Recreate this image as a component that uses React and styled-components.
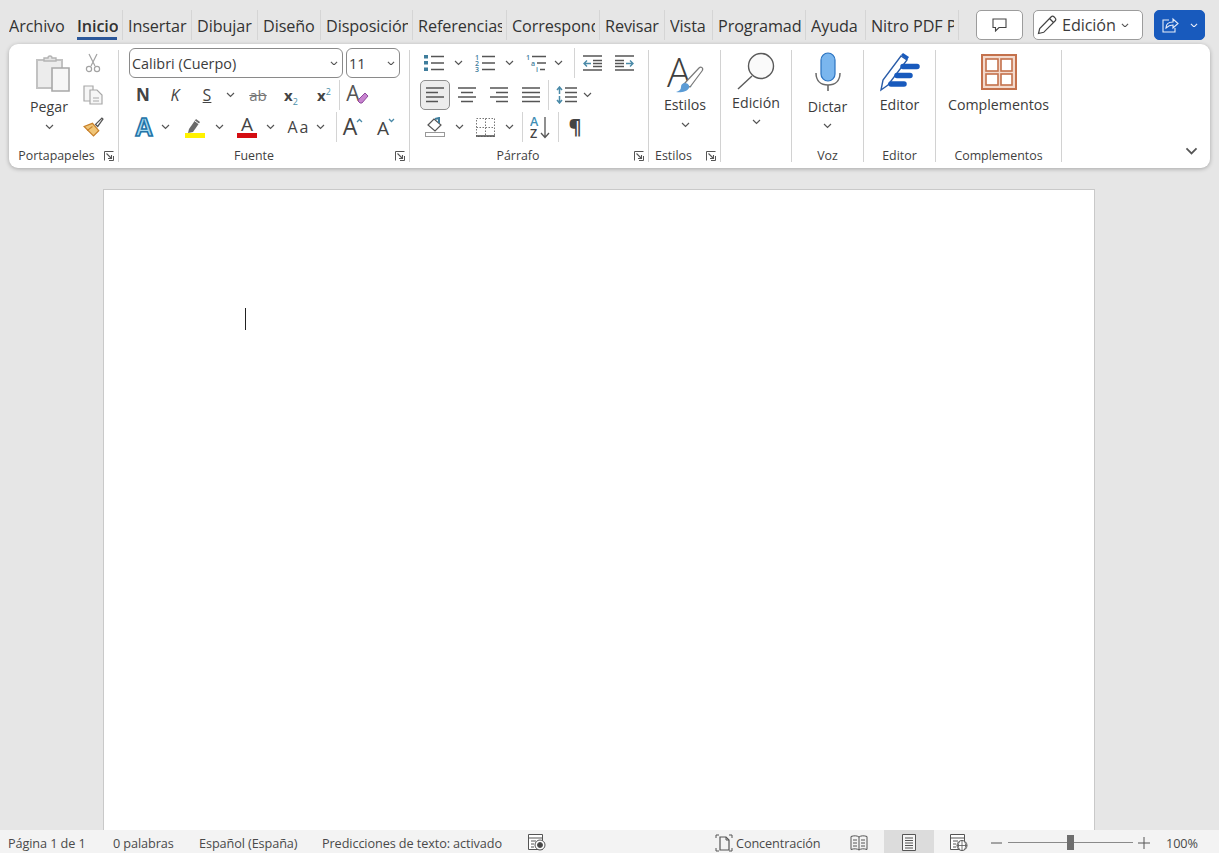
import styled, { createGlobalStyle } from 'styled-components';

const UI_FONT = '"Open Sans", "Noto Sans", "Liberation Sans", sans-serif';

const GlobalStyle = createGlobalStyle`
  html, body, #root {
    margin: 0;
    height: 100%;
  }
  body {
    font-family: ${UI_FONT};
    color: #3c3c3c;
    background: #e6e6e6;
    overflow: hidden;
  }
`;

const Shell = styled.div`
  display: flex;
  flex-direction: column;
  height: 100vh;
`;

const TitleRow = styled.header`
  display: flex;
  align-items: flex-start;
  height: 36px;
  padding: 8px 0 0 4px;
  flex-shrink: 0;
`;

const Tabs = styled.nav`
  display: flex;
  margin-top: 2px;
`;

const Tab = styled.div`
  position: relative;
  width: ${(p) => p.$w}px;
  height: 30px;
  padding: 2px 4px 0 5px;
  box-sizing: border-box;
  border-right: 1px solid ${(p) => (p.$plain ? 'transparent' : '#d5d5d5')};
  color: #333;

  &::after {
    content: '';
    display: ${(p) => (p.$active ? 'block' : 'none')};
    position: absolute;
    left: 5px;
    right: 5px;
    bottom: 0;
    height: 3px;
    background: #2b579a;
  }
`;

const TabLabel = styled.span`
  display: block;
  font-size: 16.2px;
  font-weight: ${(p) => (p.$active ? 600 : 400)};
  line-height: 28px;
  letter-spacing: -0.1px;
  white-space: nowrap;
  overflow: hidden;
`;

const HeadButton = styled.button`
  display: flex;
  align-items: center;
  justify-content: ${(p) => (p.$pl ? 'flex-start' : 'center')};
  gap: ${(p) => p.$gap || 0}px;
  width: ${(p) => p.$w}px;
  height: 30px;
  margin: 2px 0 0 ${(p) => p.$ml}px;
  padding: 0 0 0 ${(p) => p.$pl || 0}px;
  border: 1px solid ${(p) => (p.$primary ? '#185abd' : '#9c9c9c')};
  border-radius: 5px;
  background: ${(p) => (p.$primary ? '#185abd' : '#fff')};
  color: #3c3c3c;
  font-family: inherit;
  font-size: 16.2px;
  letter-spacing: -0.1px;
`;

const Ribbon = styled.section`
  display: flex;
  flex-shrink: 0;
  height: 124px;
  margin: 0 9px;
  padding: 6px 0;
  box-sizing: border-box;
  background: #fff;
  border-radius: 9px;
  box-shadow: 0 1px 4px rgba(0, 0, 0, 0.28);
`;

const Group = styled.div`
  display: flex;
  flex-direction: column;
  width: ${(p) => p.$w}px;
  flex-shrink: 0;
  box-sizing: border-box;
  border-right: 1px solid #d2d2d2;
`;

const GroupBody = styled.div`
  display: flex;
  height: 98px;
  margin-top: -3px;
  padding-left: ${(p) => p.$pl || 0}px;
  flex-shrink: 0;
`;

const GroupFoot = styled.div`
  display: flex;
  align-items: center;
  height: 17px;
  margin-top: 2px;
`;

const GroupLabel = styled.span`
  flex: 1;
  padding-right: ${(p) => p.$pr || 0}px;
  font-size: 12.4px;
  line-height: 17px;
  text-align: center;
  color: #3f3f3f;
  white-space: nowrap;
`;

const BigButton = styled.div`
  display: flex;
  flex-direction: column;
  align-items: center;
  width: ${(p) => p.$w}px;
  padding-top: ${(p) => p.$pt}px;
  flex-shrink: 0;
`;

const BigLabel = styled.span`
  margin-top: ${(p) => p.$gap}px;
  font-size: 14.2px;
  line-height: 18px;
  color: #3c3c3c;
  white-space: nowrap;
`;

const ToolColumn = styled.div`
  display: flex;
  flex-direction: column;
  width: 24px;
`;

const ToolStack = styled.div`
  display: flex;
  flex-direction: column;
`;

const ToolRow = styled.div`
  display: flex;
  align-items: center;
  height: 32px;
`;

const ToolCell = styled.div`
  display: flex;
  align-items: center;
  justify-content: center;
  height: 32px;
`;

const Slot = styled.span`
  display: flex;
  align-items: center;
  justify-content: center;
  flex-shrink: 0;
  width: ${(p) => p.$w}px;
  margin-left: ${(p) => p.$ml || 0}px;
  margin-top: ${(p) => p.$mt || 0}px;
`;

const Glyph = styled(Slot)`
  display: block;
  text-align: center;
  font-size: ${(p) => p.$size}px;
  font-weight: ${(p) => p.$weight || 400};
  font-style: ${(p) => (p.$italic ? 'italic' : 'normal')};
  text-decoration: ${(p) => p.$line || 'none'};
  letter-spacing: ${(p) => p.$track || 0}px;
  line-height: 20px;
  color: ${(p) => p.$color || '#444'};
`;

const Script = styled.span`
  font-size: 9px;
  font-weight: 400;
  line-height: 0;
  color: #4a90a8;
  vertical-align: ${(p) => (p.$up ? 'super' : 'sub')};
`;

const Divider = styled.span`
  flex-shrink: 0;
  width: 1px;
  height: 30px;
  margin-left: ${(p) => p.$ml || 0}px;
  background: #d4d4d4;
`;

const ActiveTool = styled.span`
  display: flex;
  align-items: center;
  justify-content: center;
  flex-shrink: 0;
  width: 30px;
  height: 30px;
  box-sizing: border-box;
  border: 1px solid #8d8d8d;
  border-radius: 5px;
  background: #ececec;
`;

const SelectRow = styled.div`
  display: flex;
  align-items: center;
  gap: 3px;
  height: 32px;
`;

const SelectBox = styled.div`
  display: flex;
  align-items: center;
  justify-content: space-between;
  width: ${(p) => p.$w}px;
  height: 30px;
  padding: 0 4px 0 2px;
  box-sizing: border-box;
  border: 1px solid #8a8a8a;
  border-radius: 6px;
  font-size: 14.4px;
  color: #3c3c3c;
`;

const CollapseArea = styled.div`
  display: flex;
  flex: 1;
  align-items: flex-end;
  justify-content: flex-end;
  padding: 0 12px 7px 0;
`;

const Workspace = styled.main`
  flex: 1;
  min-height: 0;
  padding: 21px 0 0 103px;
  overflow: hidden;
`;

const Sheet = styled.div`
  width: 992px;
  height: 100%;
  padding: 118px 0 0 141px;
  box-sizing: border-box;
  background: #fff;
  border: 1px solid #c9c9c9;
  border-bottom: 0;
`;

const Caret = styled.div`
  width: 1px;
  height: 22px;
  background: #222;
`;

const StatusBar = styled.footer`
  display: flex;
  align-items: center;
  flex-shrink: 0;
  height: 23px;
  background: #f3f3f3;
  font-size: 12.7px;
  color: #4a4a4a;
  letter-spacing: -0.1px;
  white-space: nowrap;
`;

const StatusText = styled.span`
  width: ${(p) => p.$w}px;
  flex-shrink: 0;
  margin-left: ${(p) => p.$ml || 0}px;
  padding-top: 2px;
`;

const StatusIcon = styled.span`
  display: flex;
  align-items: center;
  justify-content: center;
  flex-shrink: 0;
  width: ${(p) => p.$w}px;
  height: 23px;
  padding-top: 2px;
  box-sizing: border-box;
  margin-left: ${(p) => p.$ml || 0}px;
  background: ${(p) => (p.$active ? '#dcdcdc' : 'transparent')};
`;

const ZoomTrack = styled.div`
  display: flex;
  align-items: center;
  width: 125px;
  height: 16px;
  margin: 2px 0 0 6px;
  padding-left: 59px;
  box-sizing: border-box;
  flex-shrink: 0;
  background: linear-gradient(#8a8a8a, #8a8a8a) center / 100% 1px no-repeat;
`;

const ZoomThumb = styled.div`
  width: 7px;
  height: 15px;
  background: #6e6e6e;
`;

const LauncherMark = styled.svg`
  flex-shrink: 0;
  margin-right: 4px;
`;

const INK = '#555';
const TEAL = '#4a8aa8';

function Chev({ ml = 0, mt = 0, w = 9, color = '#555' }) {
  return (
    <Slot $w={w} $ml={ml} $mt={mt}>
      <svg width={w} height={w * 0.62} viewBox="0 0 9 5.6" fill="none">
        <path d="M1 1l3.5 3.5L8 1" stroke={color} strokeWidth="1.2" />
      </svg>
    </Slot>
  );
}

function PasteIcon() {
  return (
    <svg width="43" height="38" viewBox="-7 0 43 38" fill="none">
      <path d="M2 6h25v28H2z" fill="#ececec" stroke="#c2c2c2" strokeWidth="2" />
      <path d="M9 7V4h4a2 2 0 0 1 4 0h4v3z" fill="#e4e4e4" stroke="#b4b4b4" strokeWidth="1.4" />
      <path d="M17 14h17v23H17z" fill="#f6f6f6" stroke="#a8a8a8" strokeWidth="1.6" />
    </svg>
  );
}

function ScissorsIcon() {
  return (
    <svg width="16" height="20" viewBox="0 0 16 20" fill="none" stroke="#a3a3a3" strokeWidth="1.2">
      <path d="M4 1l6 12M12 1L6 13" />
      <circle cx="4" cy="16" r="2.6" />
      <circle cx="12" cy="16" r="2.6" />
    </svg>
  );
}

function CopyIcon() {
  return (
    <svg width="20" height="20" viewBox="0 0 20 20" fill="#f6f6f6" stroke="#a8a8a8" strokeWidth="1.2">
      <path d="M1 1h9v15H1z" />
      <path d="M7 5h7l5 5v9H7z" />
      <path d="M10 13h6M10 16h6" />
    </svg>
  );
}

function PainterIcon() {
  return (
    <svg width="21" height="20" viewBox="0 0 20 19" fill="none">
      <path d="M1 9l8-3 6 7-5 5z" fill="#f0c577" stroke="#c8802a" strokeWidth="1.2" />
      <path d="M4 13l5-4" stroke="#c8802a" />
      <path d="M12 7l6-6 1 1-5 7z" fill="#fff" stroke="#555" strokeWidth="1.2" />
    </svg>
  );
}

function TextEffectIcon() {
  return (
    <svg width="22" height="21" viewBox="0 0 22 21">
      <text x="11" y="19" textAnchor="middle" fontFamily="Liberation Sans" fontWeight="700" fontSize="25" fill="#a8daf0" stroke="#2274a8" strokeWidth="1.6">A</text>
    </svg>
  );
}

function HighlightIcon() {
  return (
    <svg width="22" height="22" viewBox="0 0 22 22" fill="none">
      <path d="M5 13l7-10 4 3-7 10-5 1z" fill="#6b6b6b" />
      <path d="M11 5l4 3" stroke="#fff" />
      <rect x="1" y="17" width="20" height="5" fill="#fff200" />
    </svg>
  );
}

function FontColorIcon() {
  return (
    <svg width="20" height="22" viewBox="0 0 20 22">
      <text x="10" y="15" textAnchor="middle" fontFamily="Open Sans" fontSize="19" fill="#444">A</text>
      <rect x="0" y="17" width="20" height="5" fill="#d40d12" />
    </svg>
  );
}

function EraseIcon() {
  return (
    <svg width="24" height="22" viewBox="0 0 24 22" fill="none">
      <text x="8" y="17" textAnchor="middle" fontFamily="Open Sans" fontSize="21" fill="#555">A</text>
      <path d="M14 15l6-6 3 3-6 7h-2l-2-2z" fill="#c884d0" stroke="#8e4a9c" />
    </svg>
  );
}

function GrowIcon({ small }) {
  return (
    <svg width="22" height="22" viewBox="0 0 22 22" fill="none">
      <text x="9" y="19" textAnchor="middle" fontFamily="Open Sans" fontSize={small ? 19 : 23} fill="#444">A</text>
      <path d={small ? 'M15 3l2.5 2.5L20 3' : 'M16 6l2.5-2.5L21 6'} stroke={TEAL} strokeWidth="1.3" />
    </svg>
  );
}

function BulletListIcon() {
  return (
    <svg width="20" height="18" viewBox="0 0 20 18" fill="none">
      <path d="M0 1h4v3.4H0zM0 7h4v3.4H0zM0 13.500h4v3.4H0z" fill="#3f7d9c" />
      <path d="M7 2.500h13M7 9h13M7 15.500h13" stroke={INK} strokeWidth="1.4" />
    </svg>
  );
}

function NumberListIcon() {
  return (
    <svg width="20" height="18" viewBox="0 0 20 18" fill="none">
      <g fontFamily="Open Sans" fontSize="7" fontWeight="600" fill="#3f7d9c">
        <text x="0" y="6">1</text>
        <text x="0" y="12">2</text>
        <text x="0" y="18">3</text>
      </g>
      <path d="M7 2.500h13M7 9h13M7 15.500h13" stroke={INK} strokeWidth="1.4" />
    </svg>
  );
}

function MultiListIcon() {
  return (
    <svg width="21" height="18" viewBox="0 0 21 18" fill="none">
      <g fontFamily="Open Sans" fontSize="7" fontWeight="600" fill="#3f7d9c">
        <text x="0" y="6">1</text>
        <text x="5" y="12">a</text>
        <text x="10" y="18">i</text>
      </g>
      <path d="M6 2.500h14M11 9h9M14 15.500h5" stroke={INK} strokeWidth="1.4" />
    </svg>
  );
}

function IndentIcon({ flip }) {
  return (
    <svg width="19" height="18" viewBox="0 0 19 18" fill="none" style={flip ? { transform: 'scaleX(-1)' } : undefined}>
      <path d="M0 2h19M0 16h19M10 6.500h9M10 9.500h9M10 12.500h9" stroke={INK} strokeWidth="1.3" />
      <path d="M1 9.500h7M4 6.500l-3 3 3 3" stroke={TEAL} strokeWidth="1.4" />
    </svg>
  );
}

const ALIGN_LINES = {
  left: 'M0 2h18M0 6.500h12M0 11h18M0 15.500h12',
  center: 'M0 2h18M3 6.500h12M0 11h18M3 15.500h12',
  right: 'M0 2h18M6 6.500h12M0 11h18M6 15.500h12',
  justify: 'M0 2h18M0 6.500h18M0 11h18M0 15.500h18',
};

function AlignIcon({ kind }) {
  return (
    <svg width="18" height="18" viewBox="0 0 18 18" fill="none">
      <path d={ALIGN_LINES[kind]} stroke={INK} strokeWidth="1.4" />
    </svg>
  );
}

function SpacingIcon() {
  return (
    <svg width="21" height="18" viewBox="0 0 21 18" fill="none">
      <path d="M3.500 1v7M1 4l2.500-3L6 4M3.500 10v7M1 14l2.500 3L6 14" stroke={TEAL} strokeWidth="1.5" />
      <path d="M9 2h12M9 6.500h12M9 11h12M9 15.500h12" stroke={INK} strokeWidth="1.4" />
    </svg>
  );
}

function FillIcon() {
  return (
    <svg width="20" height="20" viewBox="0 0 20 20" fill="none">
      <path d="M3 8l6-6 7 6-6 6z" fill="#fff" stroke={INK} strokeWidth="1.2" />
      <path d="M10 2l4-1v5" stroke="#3f7d9c" strokeWidth="2" />
      <rect x="0.500" y="15.500" width="19" height="4" fill="#fff" stroke="#999" />
    </svg>
  );
}

function BordersIcon() {
  return (
    <svg width="19" height="19" viewBox="0 0 19 19" fill="none">
      <path d="M0.500 0.500h18v18h-18zM9.500 0.500v18M0.500 9.500h18" stroke="#777" strokeDasharray="1.500 1.500" />
      <path d="M0 18h19" stroke={INK} strokeWidth="1.6" />
    </svg>
  );
}

function SortIcon() {
  return (
    <svg width="21" height="24" viewBox="0 0 21 24" fill="none">
      <text x="0" y="11" fontFamily="Open Sans" fontSize="12.500" fontWeight="600" fill="#3f8fb5">A</text>
      <text x="0" y="23" fontFamily="Open Sans" fontSize="12.500" fontWeight="600" fill="#444">Z</text>
      <path d="M15 2v20M11 18l4 4.500 4-4.500" stroke={INK} strokeWidth="1.3" />
    </svg>
  );
}

function StylesIcon() {
  return (
    <svg width="40" height="40" viewBox="0 0 40 40" fill="none">
      <text x="14" y="32" textAnchor="middle" fontFamily="Open Sans" fontWeight="300" fontSize="40" fill="#3f3f3f">A</text>
      <path d="M19 29L34 13c2-2 5 0 3 3L25 32z" fill="#fff" stroke="#7a7a7a" strokeWidth="1.2" />
      <path d="M11 37c4 1 11 0 13-4 1-2-1-5-4-5-2 0-4 1-4 4s-2 4-5 5z" fill="#5b9bd5" />
    </svg>
  );
}

function SearchIcon() {
  return (
    <svg width="38" height="40" viewBox="0 0 38 40" fill="none" stroke="#5a5a5a" strokeWidth="1.4">
      <circle cx="24" cy="14" r="12.500" fill="#fafafa" />
      <path d="M15 24L1 37" />
    </svg>
  );
}

function MicIcon() {
  return (
    <svg width="26" height="40" viewBox="0 0 26 40" fill="none">
      <rect x="6" y="1" width="14" height="28" rx="7" fill="#7ab6ee" stroke="#2b73c0" strokeWidth="1.2" />
      <path d="M1 21c0 8 5 12 12 12s12-4 12-12" stroke="#6a6a6a" strokeWidth="1.5" />
      <path d="M13 33v6" stroke="#6a6a6a" strokeWidth="1.6" />
    </svg>
  );
}

function EditorIcon() {
  return (
    <svg width="40" height="40" viewBox="0 0 40 40" fill="none">
      <path d="M1 38l2-10L21 4l6 4L8 33z" fill="#fff" stroke="#2a5ca8" strokeWidth="1.4" />
      <path d="M21 3l2-2 6 4-2 3z" fill="#185abd" />
      <path d="M23 14.500h14M17 23.500h13M11 32h13" stroke="#185abd" strokeWidth="5.500" strokeLinecap="round" />
    </svg>
  );
}

function AddinsIcon() {
  return (
    <svg width="36" height="36" viewBox="0 0 36 36">
      <rect x="1" y="1" width="34" height="34" fill="#f3dacd" stroke="#c4714c" strokeWidth="2" />
      <g fill="#fff" stroke="#c4714c" strokeWidth="1.6">
        <rect x="5" y="5" width="12" height="12" />
        <rect x="20" y="5" width="11" height="12" />
        <rect x="5" y="20" width="12" height="11" />
        <rect x="20" y="20" width="11" height="11" />
      </g>
    </svg>
  );
}

function Launcher() {
  return (
    <LauncherMark width="10" height="10" viewBox="0 0 10 10" fill="none" stroke="#555">
      <path d="M0.500 9.500v-9h9M9.500 5v4.500H5" strokeWidth="1" />
      <path d="M2.500 2.500l5 5M7.500 4v3.500H4" strokeWidth="1.1" />
    </LauncherMark>
  );
}

function CommentIcon() {
  return (
    <svg width="15" height="14" viewBox="0 0 15 14" fill="none" stroke="#444" strokeWidth="1.1">
      <path d="M1 1h13v8.500H7L3.500 13V9.500H1z" />
    </svg>
  );
}

function PencilIcon() {
  return (
    <svg width="20" height="20" viewBox="0 0 20 20" fill="none" stroke="#444" strokeWidth="1.2">
      <path d="M1.500 18.500l1.200-5L14 2c1-1 2.200-1 3.200 0l.8.800c1 1 1 2.200 0 3.200L6.700 17.300z" />
      <path d="M12.500 3.500l4 4" />
    </svg>
  );
}

function ShareIcon() {
  return (
    <svg width="17" height="16" viewBox="0 0 17 16" fill="none" stroke="#e8eefa" strokeWidth="1.1">
      <path d="M7 3H1v12h12v-4" />
      <path d="M4 11c0-4 3-6 7-6V2l5 4.500-5 4.500V8c-3 0-5 1-7 3z" />
    </svg>
  );
}

function MacroIcon() {
  return (
    <svg width="18" height="17" viewBox="0 0 18 17" fill="none" stroke="#555">
      <path d="M0.500 0.500h14v15h-14zM0.500 4h14M3 7h5M3 10h3M3 13h3" fill="#fff" />
      <circle cx="12" cy="11" r="5" fill="#fff" />
      <circle cx="12" cy="11" r="2.500" fill="#444" />
    </svg>
  );
}

function FocusIcon() {
  return (
    <svg width="18" height="18" viewBox="0 0 18 18" fill="none" stroke="#555">
      <path d="M1 4V1h3M14 1h3v3M1 14v3h3M14 17h3v-3" />
      <path d="M5 3h6l3 3v10H5z" strokeWidth="1.2" />
      <path d="M11 3v3h3" />
    </svg>
  );
}

function ReadIcon() {
  return (
    <svg width="18" height="16" viewBox="0 0 18 16" fill="none" stroke="#555">
      <path d="M1 1.500c3-1 6-1 8 .5 2-1.500 5-1.500 8-.5v13c-3-1-6-1-8 .5-2-1.500-5-1.500-8-.5zM9 2v13" />
      <path d="M3 5h4M3 8h4M3 11h4M11 5h4M11 8h4M11 11h4" />
    </svg>
  );
}

function PrintIcon() {
  return (
    <svg width="14" height="17" viewBox="0 0 14 17" fill="#f5f5f5" stroke="#555">
      <path d="M0.500 0.500h13v16h-13z" />
      <path d="M3 4h8M3 6.500h8M3 9h8M3 11.500h8M3 14h8" strokeWidth="1.1" />
    </svg>
  );
}

function WebIcon() {
  return (
    <svg width="18" height="17" viewBox="0 0 18 17" fill="none" stroke="#555">
      <path d="M0.500 0.500h14v15h-14zM0.500 4h14M3 7h5M3 10h3M3 13h3" fill="#fff" />
      <circle cx="12" cy="11.500" r="5" fill="#fff" />
      <path d="M7 11.500h10M12 6.500v10M9.500 7.500c-1.500 2.500-1.500 5.500 0 8M14.500 7.500c1.500 2.500 1.500 5.500 0 8" strokeWidth="0.8" />
    </svg>
  );
}

const TABS = [
  ['Archivo', 68, 'plain'],
  ['Inicio', 51, 'active'],
  ['Insertar', 69],
  ['Dibujar', 66],
  ['Diseño', 63],
  ['Disposición', 92],
  ['Referencias', 94],
  ['Correspondencia', 93],
  ['Revisar', 65],
  ['Vista', 48],
  ['Programador', 93],
  ['Ayuda', 60],
  ['Nitro PDF Pro', 93],
];

export default function App() {
  return (
    <Shell>
      <GlobalStyle />
      <TitleRow>
        <Tabs>
          {TABS.map(([name, w, mode]) => (
            <Tab key={name} $w={w} $plain={mode === 'plain'} $active={mode === 'active'}>
              <TabLabel $active={mode === 'active'}>{name}</TabLabel>
            </Tab>
          ))}
        </Tabs>
        <HeadButton $w={47} $ml={17}>
          <CommentIcon />
        </HeadButton>
        <HeadButton $w={110} $ml={10} $gap={5} $pl={3}>
          <PencilIcon />
          Edición
          <Chev w={8} />
        </HeadButton>
        <HeadButton $w={51} $ml={11} $gap={11} $primary>
          <ShareIcon />
          <Chev w={8} color="#e8eefa" />
        </HeadButton>
      </TitleRow>

      <Ribbon>
        <Group $w={110}>
          <GroupBody $pl={8}>
            <BigButton $w={64} $pt={7}>
              <PasteIcon />
              <BigLabel $gap={6}>Pegar</BigLabel>
              <Chev mt={8} />
            </BigButton>
            <ToolColumn>
              <ToolCell><ScissorsIcon /></ToolCell>
              <ToolCell><CopyIcon /></ToolCell>
              <ToolCell><PainterIcon /></ToolCell>
            </ToolColumn>
          </GroupBody>
          <GroupFoot>
            <GroupLabel>Portapapeles</GroupLabel>
            <Launcher />
          </GroupFoot>
        </Group>

        <Group $w={291}>
          <GroupBody $pl={10}>
            <ToolStack>
              <SelectRow>
                <SelectBox $w={214}>
                  Calibri (Cuerpo)
                  <Chev w={8} />
                </SelectBox>
                <SelectBox $w={54}>
                  11
                  <Chev w={8} />
                </SelectBox>
              </SelectRow>
              <ToolRow>
                <Glyph $w={16} $ml={6} $size={17} $weight={700}>N</Glyph>
                <Glyph $w={16} $ml={16} $size={16} $italic>K</Glyph>
                <Glyph $w={16} $ml={16} $size={16} $line="underline">S</Glyph>
                <Chev ml={11} />
                <Glyph $w={24} $ml={11} $size={15} $line="line-through" $color="#777">ab</Glyph>
                <Glyph $w={20} $ml={11} $size={15} $weight={700}>x<Script>2</Script></Glyph>
                <Glyph $w={20} $ml={13} $size={15} $weight={700}>x<Script $up>2</Script></Glyph>
                <Divider $ml={5} />
                <Slot $w={24} $ml={5}><EraseIcon /></Slot>
              </ToolRow>
              <ToolRow>
                <Slot $w={22} $ml={4}><TextEffectIcon /></Slot>
                <Chev ml={6} />
                <Slot $w={22} $ml={14}><HighlightIcon /></Slot>
                <Chev ml={9} />
                <Slot $w={20} $ml={13}><FontColorIcon /></Slot>
                <Chev ml={9} />
                <Glyph $w={24} $ml={12} $size={16} $track={2}>Aa</Glyph>
                <Chev ml={5} />
                <Divider $ml={11} />
                <Slot $w={22} $ml={4}><GrowIcon /></Slot>
                <Slot $w={22} $ml={11}><GrowIcon small /></Slot>
              </ToolRow>
            </ToolStack>
          </GroupBody>
          <GroupFoot>
            <GroupLabel $pr={6}>Fuente</GroupLabel>
            <Launcher />
          </GroupFoot>
        </Group>

        <Group $w={239}>
          <GroupBody $pl={10}>
            <ToolStack>
              <ToolRow>
                <Slot $w={20} $ml={4}><BulletListIcon /></Slot>
                <Chev ml={10} />
                <Slot $w={20} $ml={12}><NumberListIcon /></Slot>
                <Chev ml={10} />
                <Slot $w={21} $ml={12}><MultiListIcon /></Slot>
                <Chev ml={7} />
                <Divider $ml={11} />
                <Slot $w={19} $ml={8}><IndentIcon /></Slot>
                <Slot $w={19} $ml={13}><IndentIcon flip /></Slot>
              </ToolRow>
              <ToolRow>
                <ActiveTool><AlignIcon kind="left" /></ActiveTool>
                <Slot $w={18} $ml={8}><AlignIcon kind="center" /></Slot>
                <Slot $w={18} $ml={14}><AlignIcon kind="right" /></Slot>
                <Slot $w={18} $ml={14}><AlignIcon kind="justify" /></Slot>
                <Divider $ml={8} />
                <Slot $w={21} $ml={7}><SpacingIcon /></Slot>
                <Chev ml={6} />
              </ToolRow>
              <ToolRow>
                <Slot $w={20} $ml={5}><FillIcon /></Slot>
                <Chev ml={10} />
                <Slot $w={19} $ml={12}><BordersIcon /></Slot>
                <Chev ml={10} />
                <Divider $ml={8} />
                <Slot $w={21} $ml={7}><SortIcon /></Slot>
                <Divider $ml={7} />
                <Glyph $w={14} $ml={9} $size={20} $weight={700}>¶</Glyph>
              </ToolRow>
            </ToolStack>
          </GroupBody>
          <GroupFoot>
            <GroupLabel $pr={8}>Párrafo</GroupLabel>
            <Launcher />
          </GroupFoot>
        </Group>

        <Group $w={72}>
          <GroupBody>
            <BigButton $w={72} $pt={8}>
              <StylesIcon />
              <BigLabel $gap={1}>Estilos</BigLabel>
              <Chev mt={8} />
            </BigButton>
          </GroupBody>
          <GroupFoot>
            <GroupLabel $pr={8}>Estilos</GroupLabel>
            <Launcher />
          </GroupFoot>
        </Group>

        <Group $w={71}>
          <GroupBody>
            <BigButton $w={70} $pt={5}>
              <SearchIcon />
              <BigLabel $gap={2}>Edición</BigLabel>
              <Chev mt={7} />
            </BigButton>
          </GroupBody>
        </Group>

        <Group $w={72}>
          <GroupBody>
            <BigButton $w={71} $pt={5}>
              <MicIcon />
              <BigLabel $gap={6}>Dictar</BigLabel>
              <Chev mt={7} />
            </BigButton>
          </GroupBody>
          <GroupFoot>
            <GroupLabel>Voz</GroupLabel>
          </GroupFoot>
        </Group>

        <Group $w={72}>
          <GroupBody>
            <BigButton $w={71} $pt={5}>
              <EditorIcon />
              <BigLabel $gap={4}>Editor</BigLabel>
            </BigButton>
          </GroupBody>
          <GroupFoot>
            <GroupLabel>Editor</GroupLabel>
          </GroupFoot>
        </Group>

        <Group $w={126}>
          <GroupBody>
            <BigButton $w={125} $pt={7}>
              <AddinsIcon />
              <BigLabel $gap={6}>Complementos</BigLabel>
            </BigButton>
          </GroupBody>
          <GroupFoot>
            <GroupLabel>Complementos</GroupLabel>
          </GroupFoot>
        </Group>

        <CollapseArea>
          <Chev w={13} />
        </CollapseArea>
      </Ribbon>

      <Workspace>
        <Sheet>
          <Caret />
        </Sheet>
      </Workspace>

      <StatusBar>
        <StatusText $w={105} $ml={8}>Página 1 de 1</StatusText>
        <StatusText $w={86}>0 palabras</StatusText>
        <StatusText $w={123}>Español (España)</StatusText>
        <StatusText $w={206}>Predicciones de texto: activado</StatusText>
        <StatusIcon $w={18}><MacroIcon /></StatusIcon>
        <StatusIcon $w={18} $ml={169}><FocusIcon /></StatusIcon>
        <StatusText $w={85} $ml={3}>Concentración</StatusText>
        <StatusIcon $w={18} $ml={29}><ReadIcon /></StatusIcon>
        <StatusIcon $w={50} $ml={16} $active><PrintIcon /></StatusIcon>
        <StatusIcon $w={18} $ml={16}><WebIcon /></StatusIcon>
        <StatusIcon $w={11} $ml={23}>
          <svg width="11" height="2" viewBox="0 0 11 2"><path d="M0 1h11" stroke="#555" /></svg>
        </StatusIcon>
        <ZoomTrack><ZoomThumb /></ZoomTrack>
        <StatusIcon $w={12} $ml={5}>
          <svg width="12" height="12" viewBox="0 0 12 12"><path d="M0 6h12M6 0v12" stroke="#555" /></svg>
        </StatusIcon>
        <StatusText $w={40} $ml={16}>100%</StatusText>
      </StatusBar>
    </Shell>
  );
}
